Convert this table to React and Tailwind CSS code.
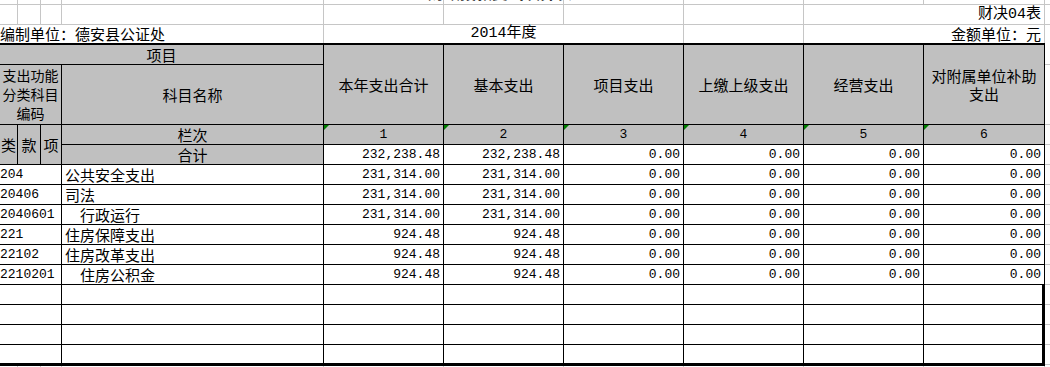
import React from "react";

// ── 列宽 / 字体 ───────────────────────────────
const COLS = "grid-cols-[18px_23px_21px_262px_120px_120px_120px_120px_120px_121px]";
const CJK = "font-['Noto_Sans_CJK_SC',sans-serif]";
const MIX = "font-['Liberation_Mono','Noto_Sans_CJK_SC',monospace]";
const NUM = "font-['Liberation_Mono',monospace] text-[13px]";

const cell = "border-r border-b border-black";
const grid = "border-r border-b border-[#c6c6c6]";
const hd = `${cell} bg-[#c0c0c0] ${CJK} text-[15px] flex items-center justify-center text-center leading-[18px] overflow-hidden`;

const heads = ["本年支出合计", "基本支出", "项目支出", "上缴上级支出", "经营支出", "对附属单位补助支出"];

const rows = [
  { code: "204",     name: "公共安全支出", lv: 0, a: "231,314.00", b: "231,314.00" },
  { code: "20406",   name: "司法",         lv: 0, a: "231,314.00", b: "231,314.00" },
  { code: "2040601", name: "行政运行",     lv: 1, a: "231,314.00", b: "231,314.00" },
  { code: "221",     name: "住房保障支出", lv: 0, a: "924.48",     b: "924.48" },
  { code: "22102",   name: "住房改革支出", lv: 0, a: "924.48",     b: "924.48" },
  { code: "2210201", name: "住房公积金",   lv: 1, a: "924.48",     b: "924.48" },
];

const Tri = () => (
  <span className="absolute top-0 left-0 w-0 h-0 border-t-[5px] border-t-[#008000] border-r-[5px] border-r-transparent" />
);

const Num = ({ v }) => (
  <div className={`${cell} ${NUM} flex items-end justify-end pr-[3px] pb-[1px] leading-[17px] whitespace-nowrap`}>{v}</div>
);

export default function App() {
  const empty = Array.from({ length: 4 });
  return (
    <div className="w-[1050px] h-[367px] overflow-hidden bg-white text-black relative">
      {/* 标题（被裁切） */}
      <span className={`absolute left-[428px] top-[-16px] ${CJK} text-[16px] font-bold leading-none text-[#333] whitespace-nowrap`}>
        财政拨款支出决算表
      </span>

      {/* 表头上方 */}
      <div className="flex">
        <div className={`grid ${COLS} grid-rows-[5px_20px_18px] w-[1045px]`}>
          {Array.from({ length: 10 }).map((_, i) => <div key={"a" + i} className={grid} />)}
          {Array.from({ length: 8 }).map((_, i) => <div key={"b" + i} className={grid} />)}
          <div className={`col-span-2 ${grid} ${MIX} text-[15px] leading-[19px] flex items-end justify-end pr-[3px]`}>财决04表</div>
          <div className={`col-span-4 border-r border-[#c6c6c6] ${CJK} text-[15px] leading-[18px] flex items-end whitespace-nowrap`}>编制单位：德安县公证处</div>
          <div className={`col-span-3 border-r border-[#c6c6c6] ${MIX} text-[15px] leading-[18px] flex items-end justify-center`}>2014年度</div>
          <div className="border-r border-[#c6c6c6]" />
          <div className={`col-span-2 border-r border-[#c6c6c6] ${CJK} text-[15px] leading-[18px] flex items-end justify-end pr-[3px] whitespace-nowrap`}>金额单位：元</div>
        </div>
        <div className="flex flex-col w-[5px]">
          <div className="h-[5px] border-b border-[#c6c6c6]" />
          <div className="h-[20px] border-b border-[#c6c6c6]" />
        </div>
      </div>

      {/* 表格 */}
      <div className="flex">
        <div className={`grid ${COLS} grid-rows-[20px_60px_20px_20px_repeat(9,20px)_21px] w-[1045px] border-t-2 border-black`}>
          <div className={`col-span-4 ${hd}`}>项目</div>
          {heads.map((h) => (
            <div key={h} className={`row-span-2 ${hd} px-[5px]`}>{h}</div>
          ))}

          <div className={`col-span-3 ${cell} bg-[#c0c0c0] ${CJK} text-[14px] leading-[19px] flex flex-col items-center justify-center whitespace-nowrap overflow-hidden`}>
            <span>支出功能</span>
            <span>分类科目</span>
            <span>编码</span>
          </div>
          <div className={hd}>科目名称</div>

          <div className={`row-span-2 ${hd}`}>类</div>
          <div className={`row-span-2 ${hd}`}>款</div>
          <div className={`row-span-2 ${hd}`}>项</div>
          <div className={hd}>栏次</div>
          {[1, 2, 3, 4, 5, 6].map((n) => (
            <div key={n} className={`${cell} bg-[#c0c0c0] relative ${NUM} flex items-end justify-center pb-[1px] leading-[17px]`}>
              <Tri />
              {n}
            </div>
          ))}

          <div className={hd}>合计</div>
          <Num v="232,238.48" />
          <Num v="232,238.48" />
          {[0, 1, 2, 3].map((i) => <Num key={i} v="0.00" />)}

          {rows.map((r) => (
            <React.Fragment key={r.code}>
              <div className={`col-span-3 ${cell} ${NUM} flex items-end pb-[1px] leading-[17px] whitespace-nowrap`}>{r.code}</div>
              <div className={`${cell} ${CJK} text-[15px] flex items-end leading-[18px] whitespace-nowrap ${r.lv ? "pl-[18px]" : "pl-[3px]"}`}>{r.name}</div>
              <Num v={r.a} />
              <Num v={r.b} />
              {[0, 1, 2, 3].map((i) => <Num key={i} v="0.00" />)}
            </React.Fragment>
          ))}

          {empty.map((_, i) => (
            <React.Fragment key={"e" + i}>
              <div className={`col-span-3 ${cell} ${i === 3 ? "border-b-[3px]" : ""}`} />
              <div className={`${cell} ${i === 3 ? "border-b-[3px]" : ""}`} />
              {[0, 1, 2, 3, 4, 5].map((j) => (
                <div key={j} className={`${cell} ${i === 3 ? "border-b-[3px]" : ""} ${j === 5 ? "border-r-[3px]" : ""}`} />
              ))}
            </React.Fragment>
          ))}
        </div>

        {/* 右侧网格线 */}
        <div className="flex flex-col w-[5px]">
          <div className="h-[22px] border-b border-[#c6c6c6]" />
          <div className="h-[60px] border-b border-[#c6c6c6]" />
          {Array.from({ length: 12 }).map((_, i) => (
            <div key={i} className="h-[20px] border-b border-[#c6c6c6]" />
          ))}
        </div>
      </div>

      {/* 表格下方网格线 */}
      <div className={`grid ${COLS} w-[1045px] h-[2px]`}>
        {Array.from({ length: 10 }).map((_, i) => <div key={i} className="border-r border-[#c6c6c6]" />)}
      </div>
    </div>
  );
}
